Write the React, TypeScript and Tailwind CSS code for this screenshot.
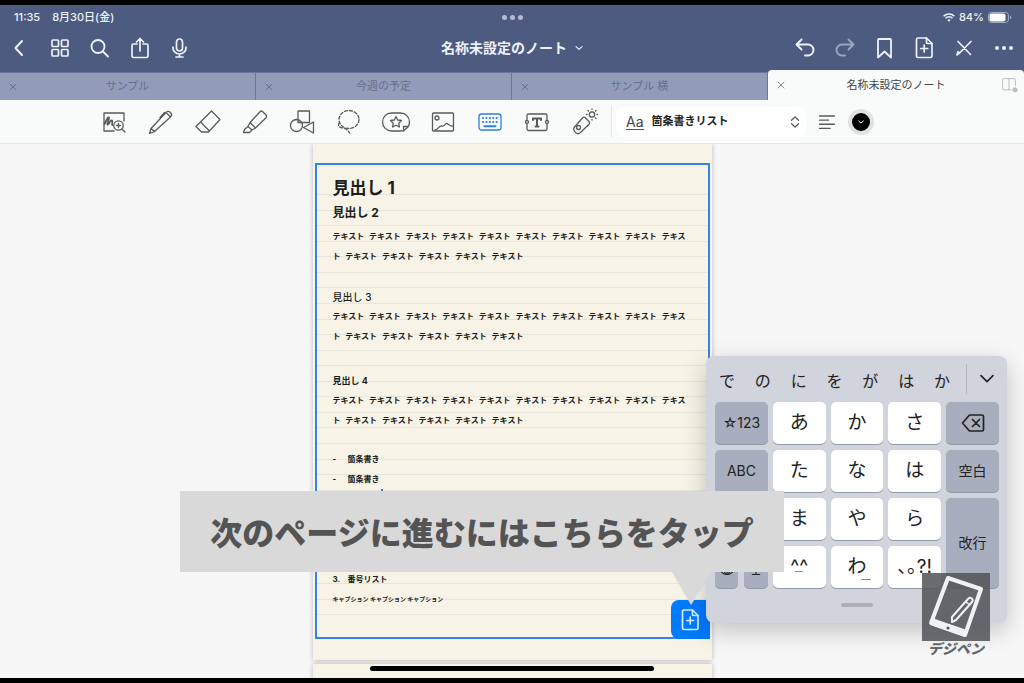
import type { ReactNode } from "react";
import clsx from "clsx";

const TABS = ["サンプル", "今週の予定", "サンプル 横", "名称未設定のノート"];
const CANDIDATES = ["で", "の", "に", "を", "が", "は", "か"];
const STYLES = ["箇条書きリスト", "番号リスト", "見出し 1", "見出し 2", "見出し 3", "見出し 4"];
const PARAGRAPH = Array(15).fill("テキスト").join(" ");
const CAPTION = Array(3).fill("キャプション").join(" ");
const RULES = Array.from({ length: 27 }, (_, i) => i);

function Icon({ size = 24, width = 1.5, className, children }: {
  size?: number;
  width?: number;
  className?: string;
  children: ReactNode;
}) {
  return (
    <svg
      width={size}
      height={size}
      viewBox="0 0 24 24"
      fill="none"
      stroke="currentColor"
      strokeWidth={width}
      strokeLinecap="round"
      strokeLinejoin="round"
      className={clsx("shrink-0", className)}
      aria-hidden="true"
    >
      {children}
    </svg>
  );
}

const Close = ({ size = 8 }: { size?: number }) => (
  <Icon size={size} width={3}><path d="M3 3l18 18M21 3L3 21" /></Icon>
);

const PagePlus = ({ size = 24 }: { size?: number }) => (
  <Icon size={size} width={1.7}>
    <path d="M6 2h8.500L20 7.500V20a1.500 1.500 0 0 1-1.500 1.500h-12.500A1.500 1.500 0 0 1 4.500 20V3.500A1.500 1.500 0 0 1 6 2z" />
    <path d="M14.500 2v4.500a1 1 0 0 0 1 1H20M12.200 9v7M8.700 12.500h7" />
  </Icon>
);

const NAV_LEFT = [
  { label: "戻る", icon: <Icon width={2}><path d="M14 5L7.500 12l6.500 7" /></Icon> },
  {
    label: "サムネイル",
    icon: (
      <Icon width={1.7}>
        <rect x="4" y="4" width="6.500" height="6.500" rx="1" />
        <rect x="13.500" y="4" width="6.500" height="6.500" rx="1" />
        <rect x="4" y="13.500" width="6.500" height="6.500" rx="1" />
        <rect x="13.500" y="13.500" width="6.500" height="6.500" rx="1" />
      </Icon>
    ),
  },
  { label: "検索", icon: <Icon width={1.8}><circle cx="10" cy="10.500" r="6.500" /><path d="M15 15.500L20 20.500" /></Icon> },
  { label: "共有", icon: <Icon width={1.7}><path d="M9 8H5.500A1.500 1.500 0 0 0 4 9.500v10.500A1.500 1.500 0 0 0 5.500 21.500h13A1.500 1.500 0 0 0 20 20V9.500A1.500 1.500 0 0 0 18.500 8H15M12 15V2.500M8.500 6L12 2.500 15.500 6" /></Icon> },
  { label: "録音", icon: <Icon width={1.7}><rect x="8.500" y="3" width="6" height="12" rx="3" /><path d="M5 11v1a6.500 6 0 0 0 13 0V11M11.500 18v3M8 21h7" /></Icon> },
];

const NAV_RIGHT = [
  { label: "元に戻す", icon: <Icon width={1.9}><path d="M9.500 3.500L4.500 8.500l5 5M4.500 8.500H16a5.500 5.500 0 0 1 0 11h-3" /></Icon> },
  { label: "やり直す", dim: true, icon: <Icon width={1.9}><path d="M16.500 3.500l5 5-5 5M21.500 8.500H10a5.500 5.500 0 0 0 0 11h3" /></Icon> },
  { label: "ブックマーク", icon: <Icon width={1.8}><path d="M7 3h11a1 1 0 0 1 1 1v17.500L12.500 15.500l-6.500 6V4a1 1 0 0 1 1-1z" /></Icon> },
  { label: "ページを追加", icon: <PagePlus /> },
  { label: "ペン切替", icon: <Icon width={1.7}><path d="M6 5.500L18.500 18.500M19 5.500L8 16.500M8.500 16l-3.500 3 1-3.500" /></Icon> },
  { label: "その他", icon: <Icon width={1}><g fill="currentColor" stroke="none"><circle cx="5" cy="12" r="2" /><circle cx="12" cy="12" r="2" /><circle cx="19" cy="12" r="2" /></g></Icon> },
];

const TOOLS = [
  {
    label: "ズーム",
    icon: (
      <>
        <path d="M12 21H2V3h20v8" />
        <path d="M2.500 14c2-4 3.500-7.500 4.500-6.500s-2.500 6-1.500 7 3-5 4.500-4-1 3.500.5 4.500" strokeWidth="1.800" />
        <circle cx="16.500" cy="15.500" r="4.700" />
        <path d="M20 19l3 3M14.500 15.500h4M16.500 13.500v4" />
      </>
    ),
  },
  { label: "ペン", icon: <path d="M.5 23.500l1.500-5L17 2.500c1.500-1.500 2.500-1.500 3.500-.7l1.700 1.700c.9 1 .6 2-.7 3.500L5.500 21.500zM17 2.500l4.500 4.500M15.500 2.500L11 7.500M2 18.500l3.500 3" /> },
  { label: "消しゴム", icon: <path d="M15.500 1L24 9.500 12.500 22H5.500L0 16.500zM4.500 12l9 9" /> },
  { label: "蛍光ペン", icon: <path d="M19.500 1.500l3.500 3.500c.8 1 .5 2 0 2.700L12.500 18 7 12.500 17 1.800c.7-.8 1.800-.9 2.500-.3zM7 12.500L5 16.500l4 3.500 3.500-2M5 16.500L1.500 19.500 .5 22.500h6L9 20" /> },
  { label: "図形", icon: <><rect x="8" y="1" width="11.500" height="11.500" /><circle cx="6.500" cy="15.500" r="6" /><path d="M13.500 17.500l10-5.500v11z" /></> },
  { label: "なげなわ", icon: <><ellipse cx="12" cy="9.500" rx="10" ry="9" strokeDasharray="3 2" /><path d="M2.500 12.500c-1.500 1.500-1.500 4.500 1.500 5s6.500 1.500 8.500 5.500" strokeDasharray="3 2" /></> },
  { label: "ステッカー", icon: <><path d="M7.500 3h9a9 9 0 0 1 9 9c0 2-.5 3.500-1.500 5L20 20.500c-1 .5-2 .5-3.500.5h-9a9 9 0 0 1 0-18zM24 16.500h-4.500V21" /><path d="M12 6.500l1.700 3.500 3.800.5-2.800 2.700.7 3.800L12 15.200 8.600 17l.7-3.800-2.800-2.700 3.800-.5z" /></> },
  { label: "画像", icon: <><rect x="1.500" y="3" width="21" height="18" rx="1" /><circle cx="6" cy="8" r="2" /><path d="M4 20c3 0 4-4.500 7-4s3-3 5-2.500 2 3 6 2.500" /></> },
  { label: "テキスト", active: true, icon: <><rect x="1" y="4" width="22" height="16" rx="2.500" /><path d="M5 8h14M5 12h14" strokeWidth="2" strokeDasharray=".2 3.200" /><path d="M6.500 16.300h11" strokeWidth="2" /></> },
  { label: "テキストボックス", icon: <><path d="M2 10V5.500A1.500 1.500 0 0 1 3.500 4h17A1.500 1.500 0 0 1 22 5.500V10M22 14v5a1.500 1.500 0 0 1-1.500 1.500h-17A1.500 1.500 0 0 1 2 19v-5" /><circle cx="2" cy="12" r="1.500" /><circle cx="22" cy="12" r="1.500" /><path d="M8 10V8.500h8V10M12 8.500v8M10.500 16.500h3" strokeWidth="2" /></> },
  { label: "レーザー", icon: <><path d="M13 7.500l4 4c1 1 .7 2 0 2.800L8.500 22.500c-1.500 1.500-3.500 1.500-5 0s-2.500-3.500-1-5.500L10.500 8c.8-.8 1.800-1.200 2.500-.5z" /><circle cx="6.500" cy="17.500" r="2" /><circle cx="20" cy="4.500" r="2.700" /><path d="M20-1V-.5M20 9.500v.5M14.500 4.500h.5M25 4.500h.5M16 .5l.5.500M23.500 8l.5.500M24 .5l-.5.500" /></> },
];

function NavButton({ label, dim, children }: { label: string; dim?: boolean; children: ReactNode }) {
  return (
    <button aria-label={label} className={clsx("flex w-10 justify-center", dim && "opacity-50")}>
      {children}
    </button>
  );
}

function Header() {
  return (
    <header className="bg-[#4d5b80] text-[#eef1fa]">
      <div className="relative flex h-6 items-center justify-between pr-3 pl-3.5 text-[11px] font-medium">
        <div className="flex gap-3">
          <span>11:35</span>
          <span>8月30日(金)</span>
        </div>
        <div className="absolute inset-x-0 flex justify-center gap-[3px]">
          <i className="size-[5px] rounded-full bg-[#b6bdd2]" />
          <i className="size-[5px] rounded-full bg-[#b6bdd2]" />
          <i className="size-[5px] rounded-full bg-[#b6bdd2]" />
        </div>
        <div className="flex items-center gap-1">
          <svg width="12" height="9" viewBox="0 0 12 9" fill="none" stroke="currentColor" strokeWidth="1.600" aria-hidden="true">
            <path d="M.6 3.200a7.700 7.700 0 0 1 10.800 0M2.500 5.300a5 5 0 0 1 7 0" />
            <path d="M6 8.800L4.300 7a2.500 2.500 0 0 1 3.400 0z" fill="currentColor" stroke="none" />
          </svg>
          <span>84%</span>
          <svg width="24" height="11" viewBox="0 0 24 11" aria-hidden="true">
            <rect x=".5" y=".5" width="20" height="10" rx="3" fill="none" stroke="#a3acc6" />
            <rect x="1.500" y="1.500" width="16" height="8" rx="2" fill="#fff" />
            <path d="M22 3.800c1 .4 1.400 1 1.400 1.700S23 6.800 22 7.200z" fill="#a3acc6" />
          </svg>
        </div>
      </div>

      <div className="mb-1 flex h-[37px] items-center">
        <div className="flex flex-1">
          {NAV_LEFT.map((n) => <NavButton key={n.label} label={n.label}>{n.icon}</NavButton>)}
        </div>
        <button className="flex items-center gap-2 text-sm font-bold">
          名称未設定のノート
          <Icon size={8} width={3.5}><path d="M3 8l9 8 9-8" /></Icon>
        </button>
        <div className="flex flex-1 justify-end">
          {NAV_RIGHT.map((n) => <NavButton key={n.label} label={n.label} dim={n.dim}>{n.icon}</NavButton>)}
        </div>
      </div>

      <nav className="grid h-[30px] grid-cols-4 items-end">
        {TABS.map((tab, i) => {
          const active = i === TABS.length - 1;
          return (
            <div
              key={tab}
              className={clsx(
                "relative flex items-center justify-center text-[11px]",
                active
                  ? "h-[30px] rounded-t bg-[#f9fbfb] text-[#444]"
                  : "h-7 border-t border-r border-[#69759a] bg-[#929cb9] text-[#66708f]"
              )}
            >
              <button aria-label={`${tab}を閉じる`} className={clsx("absolute left-[9px]", active && "text-[#8a8a8e]")}>
                <Close />
              </button>
              <button>{tab}</button>
              {active && (
                <button aria-label="分割表示" className="absolute right-1.5 text-[#b9bbc0]">
                  <Icon size={18} width={1.3}>
                    <path d="M15 18.500H5A1.500 1.500 0 0 1 3.500 17V5A1.500 1.500 0 0 1 5 3.500h14A1.500 1.500 0 0 1 20.500 5v8M12 3.500v15" />
                    <circle cx="20" cy="18.500" r="2.800" fill="currentColor" />
                  </Icon>
                </button>
              )}
            </div>
          );
        })}
      </nav>
    </header>
  );
}

function Toolbar() {
  return (
    <div className="flex h-11 items-center border-b border-[#e4e5e6] bg-[#f9fbfb] pl-[90px] text-[#5a5a5a]">
      {TOOLS.map((t) => (
        <button
          key={t.label}
          aria-label={t.label}
          className={clsx("flex w-[47px] justify-center", t.active && "text-[#2f7fdc]")}
        >
          <Icon width={1.3} className="overflow-visible">{t.icon}</Icon>
        </button>
      ))}
      <span className="ml-1 h-8 w-px bg-[#e6e7e8]" />
      <div className="relative ml-1 flex h-[30px] w-[190px] items-center rounded-lg bg-white">
        <span className="ml-2.5 border-b border-[#555] text-sm leading-[15px] text-[#444]">Aa</span>
        <select
          aria-label="段落スタイル"
          className="h-full flex-1 appearance-none bg-transparent pl-2 text-[11px] font-bold text-[#222] outline-none"
        >
          {STYLES.map((s) => <option key={s}>{s}</option>)}
        </select>
        <Icon size={14} width={2.2} className="pointer-events-none absolute right-1">
          <path d="M6 9l6-5.500L18 9M6 15l6 5.500 6-5.500" />
        </Icon>
      </div>
      <button aria-label="配置" className="ml-3">
        <Icon size={18} width={1.8}><path d="M2 4h20M2 9.500h12M2 15h20M2 20.500h14" /></Icon>
      </button>
      <button
        aria-label="文字色"
        className="ml-3 flex size-[26px] items-center justify-center rounded-full border-4 border-[#e0e1e2] bg-black text-white"
      >
        <Icon size={6} width={4}><path d="M3 8l9 8 9-8" /></Icon>
      </button>
    </div>
  );
}

function ListRow({ mark, children }: { mark: string; children: ReactNode }) {
  return (
    <li className="flex h-5 items-center">
      <span className="w-[15px]">{mark}</span>
      {children}
    </li>
  );
}

function Paragraph() {
  return (
    <p className="w-[360px] font-['DejaVu_Sans_Mono','Noto_Sans_CJK_JP',sans-serif]">{PARAGRAPH}</p>
  );
}

function Note() {
  return (
    <article className="mx-auto flex h-[516px] w-[399px] flex-col bg-[#f7f4e7] px-0.5 pt-[19px] shadow-[0_0_5px_rgba(0,0,0,0.25)]">
      <div className="relative h-[476px] border-2 border-[#2f86e8]">
        <div className="absolute inset-x-0 top-[29px] flex h-[421px] flex-col border-t border-[#e6e6dc]">
          {RULES.map((r) => <i key={r} className="flex-1 border-b border-[#e6e6dc]" />)}
        </div>
        <div className="relative pt-[11px] pl-4 text-[8px] leading-5 font-bold text-[#1c1c1c]">
          <h1 className="text-[17px] leading-6 font-bold">見出し 1</h1>
          <h2 className="mt-px mb-0.5 text-xs leading-6">見出し 2</h2>
          <Paragraph />
          <h3 className="mt-5 text-[10px] leading-5 font-medium">見出し 3</h3>
          <Paragraph />
          <h4 className="mt-6 text-[9px] leading-5">見出し 4</h4>
          <Paragraph />
          <ul className="mt-[18px]">
            <ListRow mark="-">箇条書き</ListRow>
            <ListRow mark="-">箇条書き</ListRow>
          </ul>
          <i className="ml-12 block h-4 w-0.5 bg-[#2f86e8]" />
          <ol className="mt-16">
            <ListRow mark="3.">番号リスト</ListRow>
          </ol>
          <p className="text-[6px] leading-5">{CAPTION}</p>
        </div>
        <button
          aria-label="次のページ"
          className="absolute -right-0.5 -bottom-0.5 flex size-[39px] items-center justify-center rounded-l-lg bg-[#007aff] text-[#d8ecff]"
        >
          <PagePlus />
        </button>
      </div>
    </article>
  );
}

function Key({ gray, className, label, children }: {
  gray?: boolean;
  className?: string;
  label?: string;
  children?: ReactNode;
}) {
  return (
    <button
      aria-label={label}
      className={clsx(
        "relative flex items-center justify-center rounded-[5px] shadow-[0_1px_0_#9498a4]",
        gray ? "bg-[#a8aebd] text-sm" : "bg-white text-[19px]",
        className
      )}
    >
      {children}
    </button>
  );
}

function Keyboard() {
  return (
    <section className="absolute right-[17px] bottom-[55px] h-[267px] w-[301px] rounded-lg bg-[#d1d3dd] pr-2 pl-[9px] text-[#222] shadow-[0_8px_24px_rgba(0,0,0,0.22)]">
      <div className="flex h-[46px] items-center">
        <div className="flex flex-1 pt-1">
          {CANDIDATES.map((c) => <button key={c} className="flex-1 pr-3 text-base">{c}</button>)}
        </div>
        <span className="h-[30px] w-px bg-[#b5b8c3]" />
        <button aria-label="候補を開く" className="flex w-8 justify-end pr-1">
          <Icon size={16} width={2.5}><path d="M3 7l9 9 9-9" /></Icon>
        </button>
      </div>
      <div className="grid auto-rows-[42px] grid-cols-5 gap-x-[5px] gap-y-1.5">
        <Key gray>☆123</Key>
        <Key>あ</Key>
        <Key>か</Key>
        <Key>さ</Key>
        <Key gray label="削除">
          <Icon width={1.7}><path d="M8.500 4H21a1.500 1.500 0 0 1 1.500 1.500v13A1.500 1.500 0 0 1 21 20H8.500L1.500 12zM11.500 8.500l7 7M18.500 8.500l-7 7" /></Icon>
        </Key>
        <Key gray>ABC</Key>
        <Key>た</Key>
        <Key>な</Key>
        <Key>は</Key>
        <Key gray>空白</Key>
        <Key gray label="かな" />
        <Key>ま</Key>
        <Key>や</Key>
        <Key>ら</Key>
        <Key gray className="row-span-2">改行</Key>
        <div className="flex gap-1.5">
          <Key gray className="flex-1" label="地球儀">
            <Icon size={18}><circle cx="12" cy="12" r="10" /><ellipse cx="12" cy="12" rx="4.500" ry="10" /><path d="M2 12h20M4 7h16M4 17h16M12 2v20" /></Icon>
          </Key>
          <Key gray className="flex-1" label="音声入力">
            <Icon size={18}><rect x="9" y="2" width="6" height="12" rx="3" /><path d="M5 11a7 7 0 0 0 14 0M12 18v4M7 22h10" /></Icon>
          </Key>
        </div>
        <Key>
          ^^
          <i className="absolute bottom-4 left-1/2 h-px w-2 -translate-x-1/2 bg-[#888]" />
        </Key>
        <Key>
          わ
          <i className="absolute right-3 bottom-2 h-px w-2.5 bg-[#888]" />
        </Key>
        <Key>､｡?!</Key>
      </div>
      <i className="mx-auto mt-[15px] block h-1 w-8 rounded-full bg-[#adafb5]" />
    </section>
  );
}

function Callout() {
  return (
    <div className="absolute bottom-[106px] left-[180px] w-[604px]">
      <p className="flex h-[81px] items-center justify-center bg-[#d9d9d9] pt-1 text-[32px] font-black whitespace-nowrap text-[#545454]">
        次のページに進むにはこちらをタップ
      </p>
      <svg width="40" height="33" viewBox="0 0 40 33" className="absolute top-full right-[72px]" aria-hidden="true">
        <path d="M0 0h40L19 33z" fill="#d9d9d9" />
      </svg>
    </div>
  );
}

function Watermark() {
  return (
    <div className="absolute right-[34px] bottom-[21px] w-[68px] text-center">
      <svg width="68" height="68" viewBox="0 0 68 68" className="block" aria-hidden="true">
        <path d="M0 0h68v68H0z" fill="#505256" fillOpacity=".85" />
        <g fill="none" stroke="#f0f1f5" strokeLinejoin="round">
          <path d="M26 5L59 16 43 62 9 50z" strokeWidth="4" />
          <path d="M11 49L43 60" strokeWidth="7" />
          <path d="M46 26c2-3 6 0 4 3L34 47l-4 2 0-5z" strokeWidth="2" />
          <path d="M44 29l4 3" strokeWidth="1.500" />
        </g>
        <circle cx="26" cy="55" r="1.500" fill="#505256" />
      </svg>
      <span className="block text-sm leading-4 font-black text-[#65676b] italic">デジペン</span>
    </div>
  );
}

export default function App() {
  return (
    <div lang="ja" className="flex h-screen flex-col overflow-hidden border-y-[5px] border-black font-['Inter','Noto_Sans_CJK_JP',sans-serif]">
      <Header />
      <Toolbar />
      <main className="relative flex-1 overflow-hidden bg-[#f7f7f8]">
        <Note />
        <div className="mx-auto mt-1 h-10 w-[399px] bg-[#f7f4e7] shadow-[0_0_5px_rgba(0,0,0,0.25)]" />
        <Keyboard />
        <Callout />
        <Watermark />
        <i className="absolute inset-x-0 bottom-[7px] mx-auto h-[5px] w-[284px] rounded-full bg-black" />
      </main>
    </div>
  );
}
